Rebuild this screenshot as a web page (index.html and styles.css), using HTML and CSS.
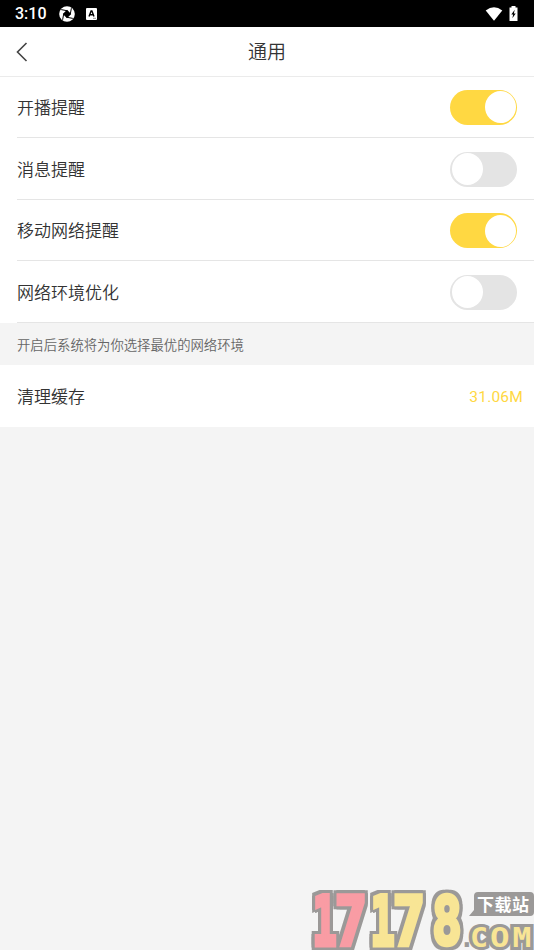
FILE: index.html
```html
<!DOCTYPE html>
<html lang="zh-CN">
<head>
<meta charset="utf-8">
<title>通用</title>
<link rel="stylesheet" href="styles.css">
</head>
<body>
<div class="status">
  <span class="time">3:10</span>
  <svg class="shutter" viewBox="0 0 16 16"><circle cx="8" cy="8" r="7.8" fill="#fff"/><path d="M8 3.8L12.2 8L8 12.2L3.8 8Z" fill="#000"/><path d="M8.5 4.8L2.2 3.6M11.2 8.5L12.4 2.2M7.5 11.2L13.8 12.4M4.8 7.5L3.6 13.8" stroke="#000" stroke-width="1"/></svg>
  <svg class="keyboard" viewBox="0 0 11 12"><rect width="11" height="12" rx="1" fill="#fff"/><path d="M3 8.5L5.1 3H5.9L8 8.5M3.8 6.8H7.2" fill="none" stroke="#000" stroke-width="1.4"/><path d="M7 10.3H10" stroke="#777" stroke-width=".8"/></svg>
  <span class="space"></span>
  <svg class="wifi" viewBox="0 0 18 14"><path d="M.7 3.5Q9-3 17.3 3.5L9 13.7Z" fill="#fff"/></svg>
  <svg class="battery" viewBox="0 0 9 15"><path d="M2.5 0H6.5V1.5H8.5V15H.5V1.5H2.5Z" fill="#fff"/><path d="M5.7 3.8L2.3 8.6H4.1L3.4 12.3L6.7 7.5H4.9Z" fill="#000"/></svg>
</div>
<header class="header">
  <svg class="back" viewBox="0 0 12 20"><path d="M10.5 1L1.5 10L10.5 19" fill="none" stroke="#444" stroke-width="1.6"/></svg>
  <h1 class="title">通用</h1>
</header>
<main>
  <div class="list">
    <div class="row"><span class="label">开播提醒</span><span class="toggle on"></span></div>
    <div class="row"><span class="label">消息提醒</span><span class="toggle"></span></div>
    <div class="row"><span class="label">移动网络提醒</span><span class="toggle on"></span></div>
    <div class="row"><span class="label">网络环境优化</span><span class="toggle"></span></div>
  </div>
  <p class="note">开启后系统将为你选择最优的网络环境</p>
  <div class="cache"><span class="label">清理缓存</span><span class="size">31.06M</span></div>
</main>
<svg class="watermark" viewBox="0 0 234 70">
  <g class="digits">
    <g class="pink"><text transform="translate(24.5 64.5) scale(.6 1)">1</text><text transform="translate(51 64.5) scale(.8 1)">7</text></g>
    <g class="yellow"><text transform="translate(82.5 64.5) scale(.6 1)">1</text><text transform="translate(109 64.5) scale(.8 1)">7</text><text transform="translate(147 64) scale(.73 .98)">8</text></g>
  </g>
  <path d="M178 12H230Q234 12 234 16V32Q234 36 230 36H169L174 30V16Q174 12 178 12Z" fill="#9b9998"/>
  <text class="station" x="177" y="31" textLength="52">下载站</text>
  <g class="domain"><text class="dot" x="159" y="67">.</text><text transform="translate(170 67) scale(1.15 1)">C</text><text transform="translate(190 67) scale(1.25 1)">O</text><text transform="translate(212.5 67) scale(1.2 1)">M</text></g>
</svg>
</body>
</html>
```
FILE: styles.css
```css
* { box-sizing: border-box; }
body {
  margin: 0;
  height: 950px;
  overflow: hidden;
  background: #f4f4f4;
  color: #333;
  font-family: Roboto, "Noto Sans CJK SC", sans-serif;
}
.status {
  display: flex;
  align-items: center;
  height: 27px;
  padding: 0 15px;
  background: #000;
  color: #fff;
}
.time { width: 44px; font-size: 16px; font-weight: 500; line-height: 27px; }
.shutter { width: 16px; height: 16px; }
.keyboard { width: 11px; height: 12px; margin-left: 11px; }
.space { flex: 1; }
.wifi { width: 18px; height: 14px; }
.battery { width: 9px; height: 15px; margin-left: 6px; margin-right: 1px; }
.header {
  display: grid;
  grid-template-columns: 30px 1fr 30px;
  align-items: center;
  height: 50px;
  background: #fff;
  border-bottom: 1px solid #ebebeb;
}
.back { width: 12px; height: 20px; margin-left: 16px; }
.title {
  margin: 0;
  padding-top: 3px;
  text-align: center;
  font-size: 19px;
  font-weight: 350;
  line-height: 46px;
}
.list { background: #fff; height: 246px; padding-left: 17px; }
.row {
  display: flex;
  align-items: center;
  justify-content: space-between;
  height: 61.4px;
  padding-right: 17px;
  border-bottom: 1px solid #e5e5e5;
}
.row + .row { padding-top: 1.4px; }
.label { padding-bottom: 2px; font-size: 17px; font-weight: 350; }
.toggle {
  display: flex;
  width: 67px;
  height: 35px;
  padding: 1.5px;
  border-radius: 18px;
  background: #e4e4e4;
}
.toggle::after {
  content: "";
  width: 31px;
  height: 32px;
  border-radius: 50%;
  background: #fff;
}
.toggle.on { justify-content: flex-end; background: #ffd842; }
.note {
  height: 42px;
  margin: 0;
  padding: 3px 0 0 17px;
  color: #666;
  font-size: 13.35px;
  font-weight: 350;
  line-height: 40px;
}
.cache {
  display: flex;
  align-items: center;
  justify-content: space-between;
  height: 62px;
  padding: 0 11px 0 17px;
  background: #fff;
}
.size { padding-top: 2px; color: #ffd842; font-size: 15.5px; letter-spacing: .2px; }
.watermark {
  position: absolute;
  right: 0;
  bottom: 0;
  width: 234px;
  height: 70px;
}
.digits text {
  font: bold 67px "DejaVu Sans Mono", monospace;
  text-anchor: middle;
  stroke-width: 4px;
  stroke-linejoin: miter;
  vector-effect: non-scaling-stroke;
}
.pink, .yellow {
  filter: drop-shadow(3px 0 #9b9998) drop-shadow(-3px 0 #9b9998) drop-shadow(0 3px #9b9998) drop-shadow(0 -3px #9b9998);
}
.pink { fill: #f99ca4; stroke: #f99ca4; }
.yellow { fill: #f8e595; stroke: #f8e595; }
.station { fill: #fff; font: bold 17px "Noto Sans CJK SC", sans-serif; }
.domain {
  fill: #f8e595;
  stroke: #9b9998;
  stroke-width: 6px;
  paint-order: stroke;
  font: bold 26px "DejaVu Sans Mono", monospace;
}
.dot { fill: #9b9998; stroke-width: 0; }
```
